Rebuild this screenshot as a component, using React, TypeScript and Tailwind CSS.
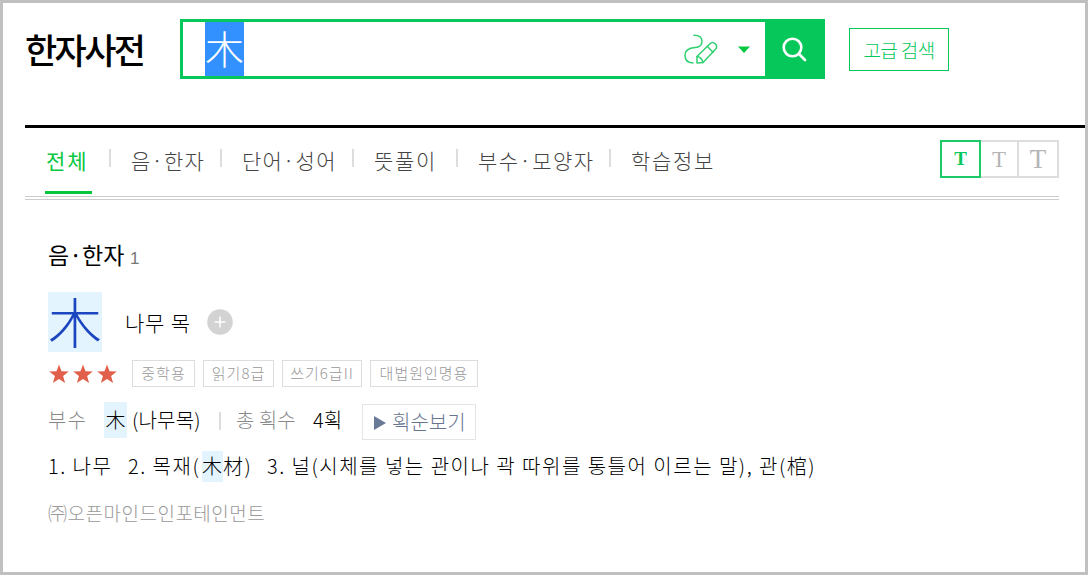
import { clsx } from 'clsx';

const tabs = [
  { label: '전체', width: 'w-[64px]', tracking: 'tracking-[2px]', active: true },
  { label: '음·한자', width: 'w-[90px]', tracking: 'tracking-[1.2px]' },
  { label: '단어·성어', width: 'w-[111px]', tracking: 'tracking-[1.2px]' },
  { label: '뜻풀이', width: 'w-[83px]', tracking: 'tracking-[1.7px]' },
  { label: '부수·모양자', width: 'w-[132px]', tracking: 'tracking-[1.4px]' },
  { label: '학습정보', width: 'w-[100px]', tracking: 'tracking-[1.7px]' },
];

const levels = [
  { label: '중학용', width: 'w-[63px]' },
  { label: '읽기8급', width: 'w-[71px]' },
  { label: '쓰기6급II', width: 'w-[80px]' },
  { label: '대법원인명용', width: 'w-[108px]' },
];

function PenIcon() {
  return (
    <svg width="34" height="30" viewBox="0 0 34 30" fill="none" stroke="#2fd06f" strokeWidth="1.5" strokeLinejoin="round" strokeLinecap="round">
      <path d="M10 1.2c5 0 8 2 8 6 0 4.500-3 6-7 6.300C4.500 14 1 16.500 1 21.500c0 4.500 3 7.300 8 7.500" />
      <path d="M13 29v-6.500L26 9.800c1.600-1.600 3.800-1.400 5.300 0 1.700 1.600 1.800 3.900.2 5.500L19 28.500z" />
      <path d="M23.500 12.500l5.500 5.700M13 22.500c2 .3 5 2 6 6" />
    </svg>
  );
}

function Stars() {
  return (
    <svg width="70" height="20" viewBox="0 0 70 20" fill="#e0604c">
      {[11, 35, 59].map((x) => (
        <path key={x} transform={`translate(${x} 0)`} d="M0 .5l2.500 6.800 7.300.2-5.700 4.500 2 7L0 15l-6.100 4 2-7-5.700-4.500 7.300-.2z" />
      ))}
    </svg>
  );
}

function Header() {
  return (
    <header className="flex h-[122px] items-start pl-[22px]">
      <h1 className="mt-[21px] w-[155px] whitespace-nowrap text-[35px] leading-[50px] font-medium tracking-[-2.600px]">한자사전</h1>
      <div className="mt-4 flex h-[60px] w-[645px] border-[3px] border-[#06c75a] pl-[22px]">
        <span className="h-[54px] w-[39px] bg-[#3390ff] text-[39px] leading-[51px] text-white">木</span>
        <div className="ml-auto flex items-center">
          <PenIcon />
          <svg className="ml-[20px] mr-[15px]" width="12" height="7" viewBox="0 0 12 7" fill="#06c740">
            <path d="M0 .5h12L6 7z" />
          </svg>
        </div>
        <button className="flex w-[57px] items-center justify-center bg-[#06c75a]">
          <svg width="26" height="26" viewBox="0 0 26 26" fill="none" stroke="#fff" strokeWidth="2.600" strokeLinecap="round">
            <circle cx="11.500" cy="11.500" r="8.800" />
            <path d="M18 18l6 6" />
          </svg>
        </button>
      </div>
      <button className="ml-6 mt-[25px] h-[43px] w-[100px] whitespace-nowrap border border-[#06c75a] text-[19px] leading-[39px] tracking-[-0.600px] text-[#06c75a]">고급 검색</button>
    </header>
  );
}

function Tabs() {
  return (
    <nav className="ml-[22px] flex h-[72px] w-[1034px] border-b border-[#ccc] border-t-[3px] border-t-transparent">
      <div className="flex h-[69px] pl-5">
        {tabs.map((tab, i) => (
          <div key={tab.label} className="flex">
            {i > 0 && <i className="mt-[21px] mr-[19px] h-[18px] w-[2px] bg-[#ddd]" />}
            <div className={clsx('relative whitespace-nowrap pl-px text-[21px] leading-[64px]', tab.width, tab.tracking, tab.active ? 'font-normal text-[#06c740]' : 'text-[#444]')}>
              {tab.label}
              {tab.active && <i className="absolute top-[63px] left-0 h-[3px] w-[47px] bg-[#06c73c]" />}
            </div>
          </div>
        ))}
      </div>
      <div className="ml-auto mt-3 flex h-[38px] text-center font-['Liberation_Serif',serif] font-bold text-[#b5b5b5]">
        <button className="w-[41px] border-2 border-[#1ccb68] text-[19px] leading-[34px] text-[#06c75a]">T</button>
        <button className="w-[38px] border-y-2 border-r-2 border-[#ddd] text-[23px] leading-[33px] font-normal">T</button>
        <button className="w-[40px] border-y-2 border-r-2 border-[#ddd] text-[27px] leading-[32px] font-normal">T</button>
      </div>
    </nav>
  );
}

function Entry() {
  return (
    <section className="pl-[45px]">
      <h2 className="mt-[37px] flex h-[34px] items-baseline whitespace-nowrap text-[23px] leading-[34px] font-normal">
        <span className="w-[82px]">음·한자</span>
        <span className="font-['Liberation_Sans',sans-serif] text-[17px] text-[#777]">1</span>
      </h2>
      <div className="mt-[21px] flex h-[60px] items-center">
        <span className="h-[60px] w-[54px] bg-[#e3f4ff] text-[54px] leading-[58px] text-[#1b46bf]">木</span>
        <span className="ml-[23px] w-[82px] whitespace-nowrap text-[21px] leading-[58px] tracking-[0.800px]">나무 목</span>
        <svg width="26" height="26" viewBox="0 0 26 26">
          <circle cx="13" cy="13" r="12.800" fill="#d3d3d3" />
          <path d="M7.500 13h11M13 7.500v11" stroke="#fff" strokeWidth="1.500" />
        </svg>
      </div>
      <div className="mt-2 flex h-[27px] items-center gap-2">
        <div className="w-[76px]"><Stars /></div>
        {levels.map((level) => (
          <span key={level.label} className={clsx('h-[27px] whitespace-nowrap border border-[#ddd] text-center text-[15px] leading-[24px] tracking-[1px] text-[#999]', level.width)}>{level.label}</span>
        ))}
      </div>
      <div className="mt-[15px] flex h-[38px] items-start whitespace-nowrap text-[20px] leading-[35px]">
        <span className="w-[56px] tracking-[1px] text-[#888]">부수</span>
        <span className="h-[36px] w-[23px] bg-[#e3f4ff] text-center">木</span>
        <span className="ml-[5px] w-[87px] text-[20px] tracking-[0.200px]">(나무목)</span>
        <i className="mt-[10px] mr-[15px] h-[18px] w-[2px] bg-[#ddd]" />
        <span className="w-[77px] text-[#888]">총 획수</span>
        <span className="w-[49px]">4획</span>
        <button className="mt-[2px] flex h-[36px] w-[114px] items-center border border-[#e5e5e5] pl-[11px] text-[20px] leading-[32px] text-[#66758f]">
          <svg width="12" height="14" viewBox="0 0 12 14" fill="#6b7a96" className="mr-[6px] mt-px">
            <path d="M0 0l12 7-12 7z" />
          </svg>
          획순보기
        </button>
      </div>
      <p className="mt-[11px] flex h-[31px] whitespace-nowrap text-[20px] leading-[30px] tracking-[1.500px]">
        <span className="w-[80px]">1. 나무</span>
        <span className="w-[74px]">2. 목재(</span>
        <span className="w-[21px] bg-[#e3f4ff]">木</span>
        <span className="w-[44px]">材)</span>
        <span>3. 널(시체를 넣는 관이나 곽 따위를 통틀어 이르는 말), 관(棺)</span>
      </p>
      <p className="mt-[15px] text-[19px] leading-[31px] tracking-[0.500px] text-[#999]">㈜오픈마인드인포테인먼트</p>
    </section>
  );
}

export default function App() {
  return (
    <div className="h-[575px] w-[1088px] overflow-hidden border-[3px] border-[#c0c0c0] bg-white font-['Noto_Sans_CJK_KR',sans-serif] font-light text-black">
      <Header />
      <div className="ml-[22px] h-[3px] bg-black" />
      <div className="-mt-[3px]">
        <Tabs />
      </div>
      <div className="ml-[22px] mt-[2px] h-px w-[1034px] bg-[#ccc]" />
      <Entry />
    </div>
  );
}
